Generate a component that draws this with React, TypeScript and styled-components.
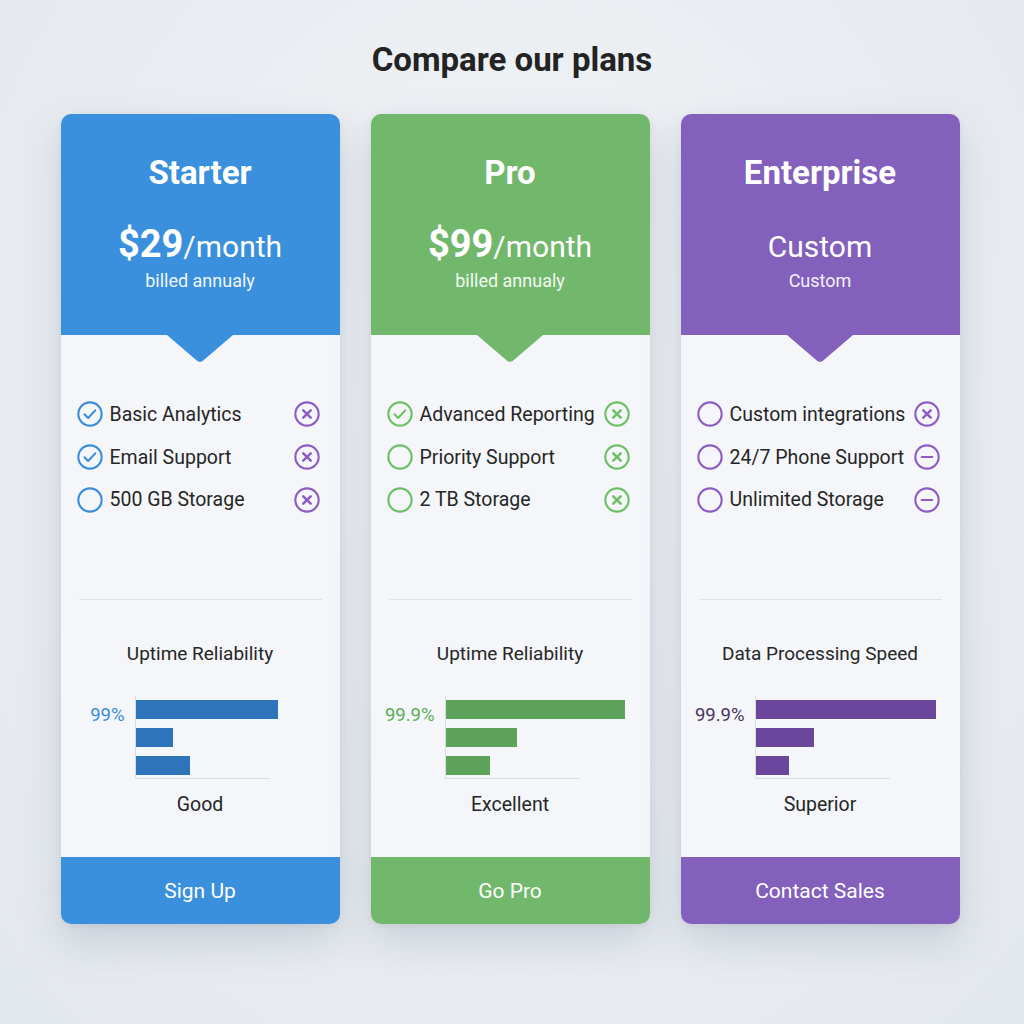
import styled, { createGlobalStyle } from "styled-components";

const GlobalStyle = createGlobalStyle`
  body {
    margin: 0;
    font-family: Roboto, "Liberation Sans", Arial, sans-serif;
    background: radial-gradient(ellipse at 50% 40%, #f2f4f7 0%, #e9edf1 60%, #e3e8ed 100%);
    min-height: 1024px;
    color: #222;
  }
`;

const Page = styled.div`
  display: flex;
  flex-direction: column;
  align-items: center;
  padding-top: 40px;
`;

const Heading = styled.h1`
  margin: 0;
  font-size: 33px;
  line-height: 40px;
  font-weight: 700;
  color: #232323;
`;

const Cards = styled.div`
  display: flex;
  gap: 31px;
  margin-top: 34px;
  margin-left: -4px;
`;

const Card = styled.div`
  width: 279px;
  height: 810px;
  display: flex;
  flex-direction: column;
  border-radius: 10px;
  background: #f4f6f9;
  box-shadow: 0 18px 40px rgba(90, 110, 130, 0.22), 0 2px 6px rgba(90, 110, 130, 0.1);
  overflow: hidden;
`;

const Header = styled.div<{ $color: string }>`
  position: relative;
  height: 221px;
  flex-shrink: 0;
  box-sizing: border-box;
  padding-top: 39px;
  background: ${(p) => p.$color};
  color: #fff;
  text-align: center;
  &::after {
    content: "";
    position: absolute;
    left: 50%;
    bottom: -27px;
    width: 66px;
    height: 27px;
    margin-left: -33px;
    background: ${(p) => p.$color};
    clip-path: polygon(0 0, 100% 0, 54% 96%, 50% 100%, 46% 96%);
    z-index: 1;
  }
`;

const PlanName = styled.div`
  font-size: 33px;
  line-height: 40px;
  font-weight: 700;
`;

const Price = styled.div`
  margin-top: 31px;
  height: 46px;
  font-size: 30px;
  line-height: 46px;
  font-weight: 400;
  b {
    font-size: 38px;
    line-height: 0;
    font-weight: 700;
  }
`;

const Billing = styled.div`
  margin-top: 0;
  font-size: 18px;
  line-height: 22px;
  opacity: 0.92;
`;

const Body = styled.div`
  flex: 1;
  display: flex;
  flex-direction: column;
  padding-top: 58px;
`;

const FeatureList = styled.ul`
  list-style: none;
  margin: 0;
  padding: 0 19px 0 15px;
`;

const Feature = styled.li`
  height: 42.7px;
  display: flex;
  align-items: center;
  font-size: 19.5px;
  color: #262626;
  span {
    flex: 1;
    margin-left: 6px;
    white-space: nowrap;
  }
`;

const Divider = styled.hr`
  margin: 78px 18px 0;
  border: none;
  border-top: 1.5px solid #dde2e8;
`;

const ChartTitle = styled.div`
  margin-top: 42px;
  text-align: center;
  font-size: 19px;
  line-height: 24px;
  color: #262626;
`;

const Chart = styled.div`
  display: flex;
  margin-top: 30px;
  padding-left: 8px;
`;

const ChartLabel = styled.div<{ $color: string }>`
  width: 56px;
  padding-right: 10px;
  text-align: right;
  font-size: 18.5px;
  line-height: 22px;
  padding-top: 8px;
  color: ${(p) => p.$color};
`;

const Plot = styled.div`
  width: 134px;
  display: flex;
  flex-direction: column;
  gap: 9px;
  padding: 4px 0 3px;
  border-left: 1px solid #d7dce3;
  border-bottom: 1px solid #d7dce3;
`;

const Bar = styled.div<{ $color: string }>`
  height: 19px;
  background: ${(p) => p.$color};
  flex-shrink: 0;
`;

const Rating = styled.div`
  margin-top: 14px;
  text-align: center;
  font-size: 19.5px;
  line-height: 24px;
  color: #262626;
`;

const Button = styled.button<{ $color: string }>`
  height: 67px;
  flex-shrink: 0;
  border: none;
  background: ${(p) => p.$color};
  color: #fff;
  font-family: inherit;
  font-size: 21px;
  cursor: pointer;
`;

type IconKind = "check" | "empty" | "x" | "minus";

const Icon = ({ kind, color }: { kind: IconKind; color: string }) => (
  <svg width="28" height="28" viewBox="0 0 24 24" fill="none" stroke={color} strokeWidth="1.8" strokeLinecap="round" strokeLinejoin="round">
    <circle cx="12" cy="12" r="10" />
    {kind === "check" && <path d="M7.3 12.3l3.1 3.1 6.1-6.5" />}
    {kind === "x" && <path d="M8.8 8.8l6.4 6.4M15.2 8.8l-6.4 6.4" strokeWidth="2.1" />}
    {kind === "minus" && <path d="M7.5 12h9" />}
  </svg>
);

interface IPlan {
  name: string;
  price?: string;
  priceText: string;
  billing: string;
  color: string;
  barColor: string;
  labelColor: string;
  features: { text: string; left: IconKind; right: IconKind }[];
  chartTitle: string;
  value: string;
  bars: number[];
  rating: string;
  cta: string;
}

const plans: IPlan[] = [
  {
    name: "Starter",
    price: "$29",
    priceText: "/month",
    billing: "billed annualy",
    color: "#3a90dc",
    barColor: "#2d74bb",
    labelColor: "#3a8ddb",
    features: [
      { text: "Basic Analytics", left: "check", right: "x" },
      { text: "Email Support", left: "check", right: "x" },
      { text: "500 GB Storage", left: "empty", right: "x" },
    ],
    chartTitle: "Uptime Reliability",
    value: "99%",
    bars: [142, 37, 54],
    rating: "Good",
    cta: "Sign Up",
  },
  {
    name: "Pro",
    price: "$99",
    priceText: "/month",
    billing: "billed annualy",
    color: "#72b86c",
    barColor: "#5ea35c",
    labelColor: "#5aae55",
    features: [
      { text: "Advanced Reporting", left: "check", right: "x" },
      { text: "Priority Support", left: "empty", right: "x" },
      { text: "2 TB Storage", left: "empty", right: "x" },
    ],
    chartTitle: "Uptime Reliability",
    value: "99.9%",
    bars: [179, 71, 44],
    rating: "Excellent",
    cta: "Go Pro",
  },
  {
    name: "Enterprise",
    priceText: "Custom",
    billing: "Custom",
    color: "#8460bd",
    barColor: "#6a479d",
    labelColor: "#4a3560",
    features: [
      { text: "Custom integrations", left: "empty", right: "x" },
      { text: "24/7 Phone Support", left: "empty", right: "minus" },
      { text: "Unlimited Storage", left: "empty", right: "minus" },
    ],
    chartTitle: "Data Processing Speed",
    value: "99.9%",
    bars: [180, 58, 33],
    rating: "Superior",
    cta: "Contact Sales",
  },
];

const PURPLE = "#8c5cc4";

const App = () => {
  return (
    <>
      <GlobalStyle />
      <Page>
        <Heading>Compare our plans</Heading>
        <Cards>
          {plans.map((plan, i) => {
            const rightColor = i === 1 ? "#6cc063" : PURPLE;
            const leftColor = i === 0 ? "#3a8ddb" : i === 1 ? "#6cc063" : PURPLE;
            return (
              <Card key={plan.name}>
                <Header $color={plan.color}>
                  <PlanName>{plan.name}</PlanName>
                  <Price>
                    {plan.price && <b>{plan.price}</b>}
                    {plan.priceText}
                  </Price>
                  <Billing>{plan.billing}</Billing>
                </Header>
                <Body>
                  <FeatureList>
                    {plan.features.map((f) => (
                      <Feature key={f.text}>
                        <Icon kind={f.left} color={leftColor} />
                        <span>{f.text}</span>
                        <Icon kind={f.right} color={rightColor} />
                      </Feature>
                    ))}
                  </FeatureList>
                  <Divider />
                  <ChartTitle>{plan.chartTitle}</ChartTitle>
                  <Chart>
                    <ChartLabel $color={plan.labelColor}>{plan.value}</ChartLabel>
                    <Plot>
                      {plan.bars.map((w, j) => (
                        <Bar key={j} $color={plan.barColor} style={{ width: w }} />
                      ))}
                    </Plot>
                  </Chart>
                  <Rating>{plan.rating}</Rating>
                </Body>
                <Button $color={plan.color}>{plan.cta}</Button>
              </Card>
            );
          })}
        </Cards>
      </Page>
    </>
  );
};

export default App;
